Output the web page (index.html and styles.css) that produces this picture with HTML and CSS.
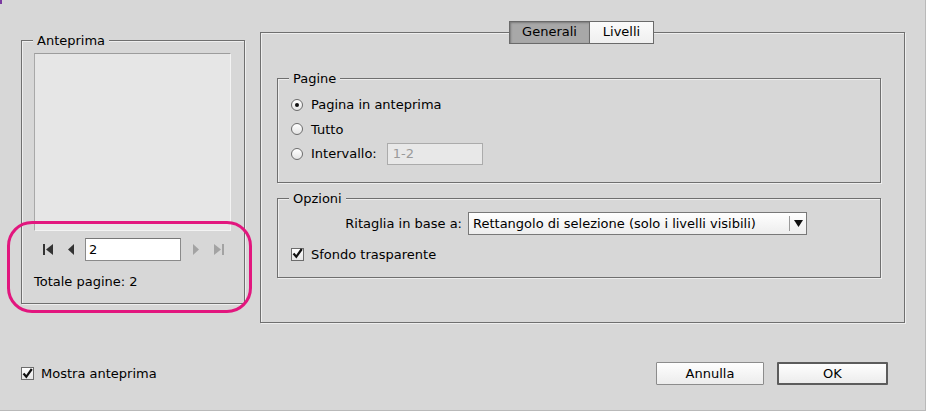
FILE: index.html
```html
<!DOCTYPE html>
<html lang="it">
<head>
<meta charset="utf-8">
<title>Esporta</title>
<link rel="stylesheet" href="styles.css">
</head>
<body>
<div class="window">
  <div class="main">
    <section class="group preview-group">
      <div class="legend">Anteprima</div>
      <div class="preview-box"></div>
      <div class="nav-row">
        <svg class="nav-icon first" width="10" height="11" viewBox="0 0 10 11"><rect x="0" y="0" width="2" height="11" fill="#333"/><polygon points="10,0 10,11 3,5.5" fill="#333"/></svg>
        <svg class="nav-icon prev" width="6" height="11" viewBox="0 0 6 11"><polygon points="6,0 6,11 0,5.5" fill="#333"/></svg>
        <input class="page-input" type="text" value="2" readonly>
        <svg class="nav-icon next" width="6" height="11" viewBox="0 0 6 11"><polygon points="0,0 0,11 6,5.5" fill="#a3a3a3"/></svg>
        <svg class="nav-icon last" width="10" height="11" viewBox="0 0 10 11"><polygon points="0,0 0,11 7,5.5" fill="#a3a3a3"/><rect x="8" y="0" width="2" height="11" fill="#a3a3a3"/></svg>
      </div>
      <div class="total">Totale pagine: 2</div>
    </section>

    <section class="panel">
      <div class="tabs">
        <div class="tab active">Generali</div>
        <div class="tab">Livelli</div>
      </div>

      <div class="group pages-group">
        <div class="legend">Pagine</div>
        <div class="radio-row first-row"><span class="radio checked"></span><span>Pagina in anteprima</span></div>
        <div class="radio-row"><span class="radio"></span><span>Tutto</span></div>
        <div class="radio-row"><span class="radio"></span><span>Intervallo:</span><input class="range-input" type="text" value="1-2" readonly></div>
      </div>

      <div class="group options-group">
        <div class="legend">Opzioni</div>
        <div class="select-row">
          <span class="select-label">Ritaglia in base a:</span>
          <div class="select">
            <span class="select-text">Rettangolo di selezione (solo i livelli visibili)</span>
            <span class="select-divider"></span>
            <svg class="select-arrow" width="9" height="7" viewBox="0 0 9 7"><polygon points="0,0 9,0 4.5,7" fill="#111"/></svg>
          </div>
        </div>
        <div class="check-row">
          <span class="checkbox"><svg width="11" height="11" viewBox="0 0 11 11"><path d="M1.5 5.5 L4.3 8.8 L9.8 1" fill="none" stroke="#111" stroke-width="2.2"/></svg></span>
          <span>Sfondo trasparente</span>
        </div>
      </div>
    </section>
  </div>

  <div class="bottom-row">
    <div class="check-row show-preview">
      <span class="checkbox"><svg width="11" height="11" viewBox="0 0 11 11"><path d="M1.5 5.5 L4.3 8.8 L9.8 1" fill="none" stroke="#111" stroke-width="2.2"/></svg></span>
      <span>Mostra anteprima</span>
    </div>
    <button class="btn cancel" type="button">Annulla</button>
    <button class="btn ok" type="button">OK</button>
  </div>

  <div class="highlight"></div>
  <div class="corner"></div>
</div>
</body>
</html>
```

FILE: styles.css
```css
* { box-sizing: border-box; }

html, body {
  margin: 0;
  padding: 0;
  background: #d7d7d7;
}

body {
  font-family: "DejaVu Sans", "Liberation Sans", sans-serif;
  font-size: 13px;
  color: #000;
  line-height: 17px;
}

.window {
  position: relative;
  width: 926px;
  height: 411px;
  padding: 32px 0 0 21px;
  border-right: 1px solid #b9b9b9;
  border-bottom: 1px solid #b9b9b9;
  background: #d7d7d7;
}

.main {
  display: flex;
  align-items: flex-start;
  gap: 15px;
}

/* etched group box */
.group {
  display: flex;
  flex-direction: column;
  border: 1px solid #6f6f6f;
  box-shadow: inset 1px 1px 0 #eeeeee, 1px 1px 0 #eeeeee;
}

.legend {
  align-self: flex-start;
  margin: -9px 0 0 11px;
  padding: 0 4px;
  background: #d7d7d7;
  line-height: 17px;
  height: 17px;
}

/* left: preview */
.preview-group {
  margin-top: 8px;
  width: 224px;
  height: 264px;
}

.preview-box {
  margin: 4px 0 0 12px;
  width: 197px;
  height: 178px;
  background: #e6e6e6;
  border-top: 1px solid #9c9c9c;
  border-left: 1px solid #a8a8a8;
  border-right: 1px solid #f3f3f3;
  border-bottom: 1px solid #f3f3f3;
}

.nav-row {
  display: flex;
  align-items: center;
  margin-top: 7px;
  padding-left: 21px;
  height: 23px;
}

.nav-icon { display: block; flex: none; }
.nav-icon.prev { margin-left: 15px; }
.page-input { margin-left: 11px; }
.nav-icon.next { margin-left: 12px; }
.nav-icon.last { margin-left: 15px; }

.page-input,
.range-input {
  appearance: none;
  font: inherit;
  color: #000;
  width: 96px;
  height: 23px;
  padding: 0 3px;
  margin-top: 0;
  margin-bottom: 0;
  margin-right: 0;
  border: 1px solid #8a8a8a;
  border-top-color: #777;
  background: #fff;
  outline: none;
}

.total {
  margin-top: 12px;
  padding-left: 12px;
}

/* right panel */
.panel {
  display: flex;
  flex-direction: column;
  width: 645px;
  height: 291px;
  border: 1px solid #6f6f6f;
  box-shadow: inset 1px 1px 0 #eeeeee, 1px 1px 0 #eeeeee;
}

.tabs {
  align-self: center;
  display: flex;
  margin-top: -12px;
  margin-left: -2px;
  border: 1px solid #6a6a6a;
  background: #fff;
}

.tab {
  height: 21px;
  line-height: 20px;
  padding: 0 11px;
  background: linear-gradient(#fbfbfb, #efefef);
}

.tab.active {
  width: 80px;
  text-align: center;
  padding: 0;
  background: #a8a8a8;
  box-shadow: inset 1px 1px 2px #7a7a7a;
  border-right: 1px solid #6a6a6a;
}

.tab + .tab { width: 63px; text-align: center; padding: 0; }

.pages-group {
  margin: 34px 0 0 16px;
  width: 604px;
  height: 105px;
}

.radio-row {
  display: flex;
  align-items: center;
  height: 24.5px;
  padding-left: 13px;
}

.radio-row.first-row { margin-top: 5.5px; }

.radio {
  flex: none;
  position: relative;
  width: 12px;
  height: 12px;
  margin-right: 8px;
  border: 1px solid #6c6c6c;
  border-radius: 50%;
  background: linear-gradient(#ffffff, #e4e4e4);
}

.radio.checked::after {
  content: "";
  position: absolute;
  left: 3px;
  top: 3px;
  width: 4px;
  height: 4px;
  border-radius: 50%;
  background: #111;
}

.range-input {
  margin-left: 10px;
  width: 96px;
  height: 22px;
  background: #e8e8e8;
  border: 1px solid #ababab;
  color: #9a9a9a;
  padding-left: 5px;
}

.options-group {
  margin: 15px 0 0 16px;
  width: 604px;
  height: 80px;
}

.select-row {
  display: flex;
  align-items: center;
  margin-top: 5px;
  height: 23px;
}

.select-label {
  width: 184px;
  text-align: right;
  margin-right: 6px;
}

.select {
  display: flex;
  align-items: center;
  width: 339px;
  height: 23px;
  padding-left: 4px;
  border: 1px solid #787878;
  background: linear-gradient(#ffffff, #ededed);
}

.select-text { flex: 1; white-space: nowrap; overflow: hidden; }

.select-divider {
  width: 1px;
  height: 15px;
  background: #9a9a9a;
  margin: 0 4px 0 4px;
}

.select-arrow { display: block; margin-right: 3px; }

.check-row {
  display: flex;
  align-items: center;
  height: 24px;
}

.options-group .check-row {
  margin-top: 7px;
  padding-left: 13px;
}

.checkbox {
  flex: none;
  display: flex;
  align-items: center;
  justify-content: center;
  width: 13px;
  height: 13px;
  margin-right: 7px;
  border: 1px solid #6c6c6c;
  background: linear-gradient(#ffffff, #e6e6e6);
}

.checkbox svg { display: block; margin-top: -1px; }

/* bottom */
.bottom-row {
  display: flex;
  align-items: center;
  margin-top: 39px;
  padding-right: 37px;
  height: 23px;
}

.show-preview { margin-right: auto; }

.btn {
  font: inherit;
  color: #000;
  height: 23px;
  padding: 0;
  margin: 0;
  border: 1px solid #8c8c8c;
  background: linear-gradient(#fefefe, #ececec);
  border-radius: 1px;
}

.btn.cancel { width: 108px; }

.btn.ok {
  width: 111px;
  margin-left: 13px;
  border: 2px solid #5c5c5c;
}

/* overlays */
.highlight {
  position: absolute;
  left: 7px;
  top: 221px;
  width: 245px;
  height: 92px;
  border: 3px solid #e2167e;
  border-radius: 25px;
  pointer-events: none;
}

.corner {
  position: absolute;
  left: 0;
  top: 0;
  width: 2px;
  height: 4px;
  background: #7a3aa0;
}
```
